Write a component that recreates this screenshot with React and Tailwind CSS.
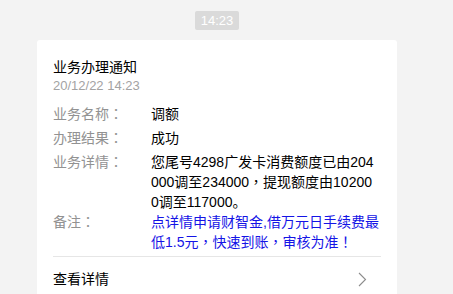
import React from "react";

const TC = ({ children }) => (
  <span className="font-['Noto_Sans_CJK_TC',sans-serif] leading-none">{children}</span>
);

function Row({ label, children, className = "" }) {
  return (
    <div className={`flex h-fit ${className}`}>
      <div className="w-[98px] shrink-0 text-[#929292]">
        {label}
        <TC>：</TC>
      </div>
      <div className="flex-1 text-black">{children}</div>
    </div>
  );
}

export default function App() {
  return (
    <div className="min-h-[294px] bg-[#f3f3f3] pt-[11px] font-['Liberation_Sans','Noto_Sans_CJK_SC',sans-serif] overflow-hidden">
      <div className="ml-[37px] w-[360px] flex flex-col">
        <div className="flex justify-center">
          <span className="h-[19px] px-[6px] bg-[#dadada] text-white text-[13px] leading-[19px] rounded-[2px]">
            14:23
          </span>
        </div>
        <div className="mt-[10px] bg-white rounded-[3px] px-4 pt-[17px] pb-8">
          <div className="text-[14px] leading-[20px] text-black">业务办理通知</div>
          <div className="text-[13px] leading-[18px] text-[#a3a3a3]">20/12/22 14:23</div>
          <div className="mt-[9px] text-[14px] leading-[20px] flex flex-col">
            <Row label="业务名称" className="mb-[4px]">调额</Row>
            <Row label="办理结果" className="mb-[4px]">成功</Row>
            <Row label="业务详情">
              <span className="whitespace-nowrap">
                您尾号4298广发卡消费额度已由204
                <br />
                000调至234000<TC>，</TC>提现额度由10200
                <br />
                0调至117000。
              </span>
            </Row>
            <Row label="备注">
              <span className="whitespace-nowrap text-[#1414e6]">
                点详情申请财智金,借万元日手续费最
                <br />
                低1.5元<TC>，</TC>快速到账<TC>，</TC>审核为准<TC>！</TC>
              </span>
            </Row>
          </div>
          <div className="mt-[4px] h-px bg-[#e6e6e6]" />
          <div className="mt-[12px] flex items-center justify-between text-[14px] leading-[20px] text-black">
            <span>查看详情</span>
            <svg width="9" height="15" viewBox="0 0 9 15" className="mr-[14px]">
              <polyline points="1,1 7.5,7.5 1,14" fill="none" stroke="#8c8c8c" strokeWidth="1.1" />
            </svg>
          </div>
        </div>
      </div>
    </div>
  );
}
